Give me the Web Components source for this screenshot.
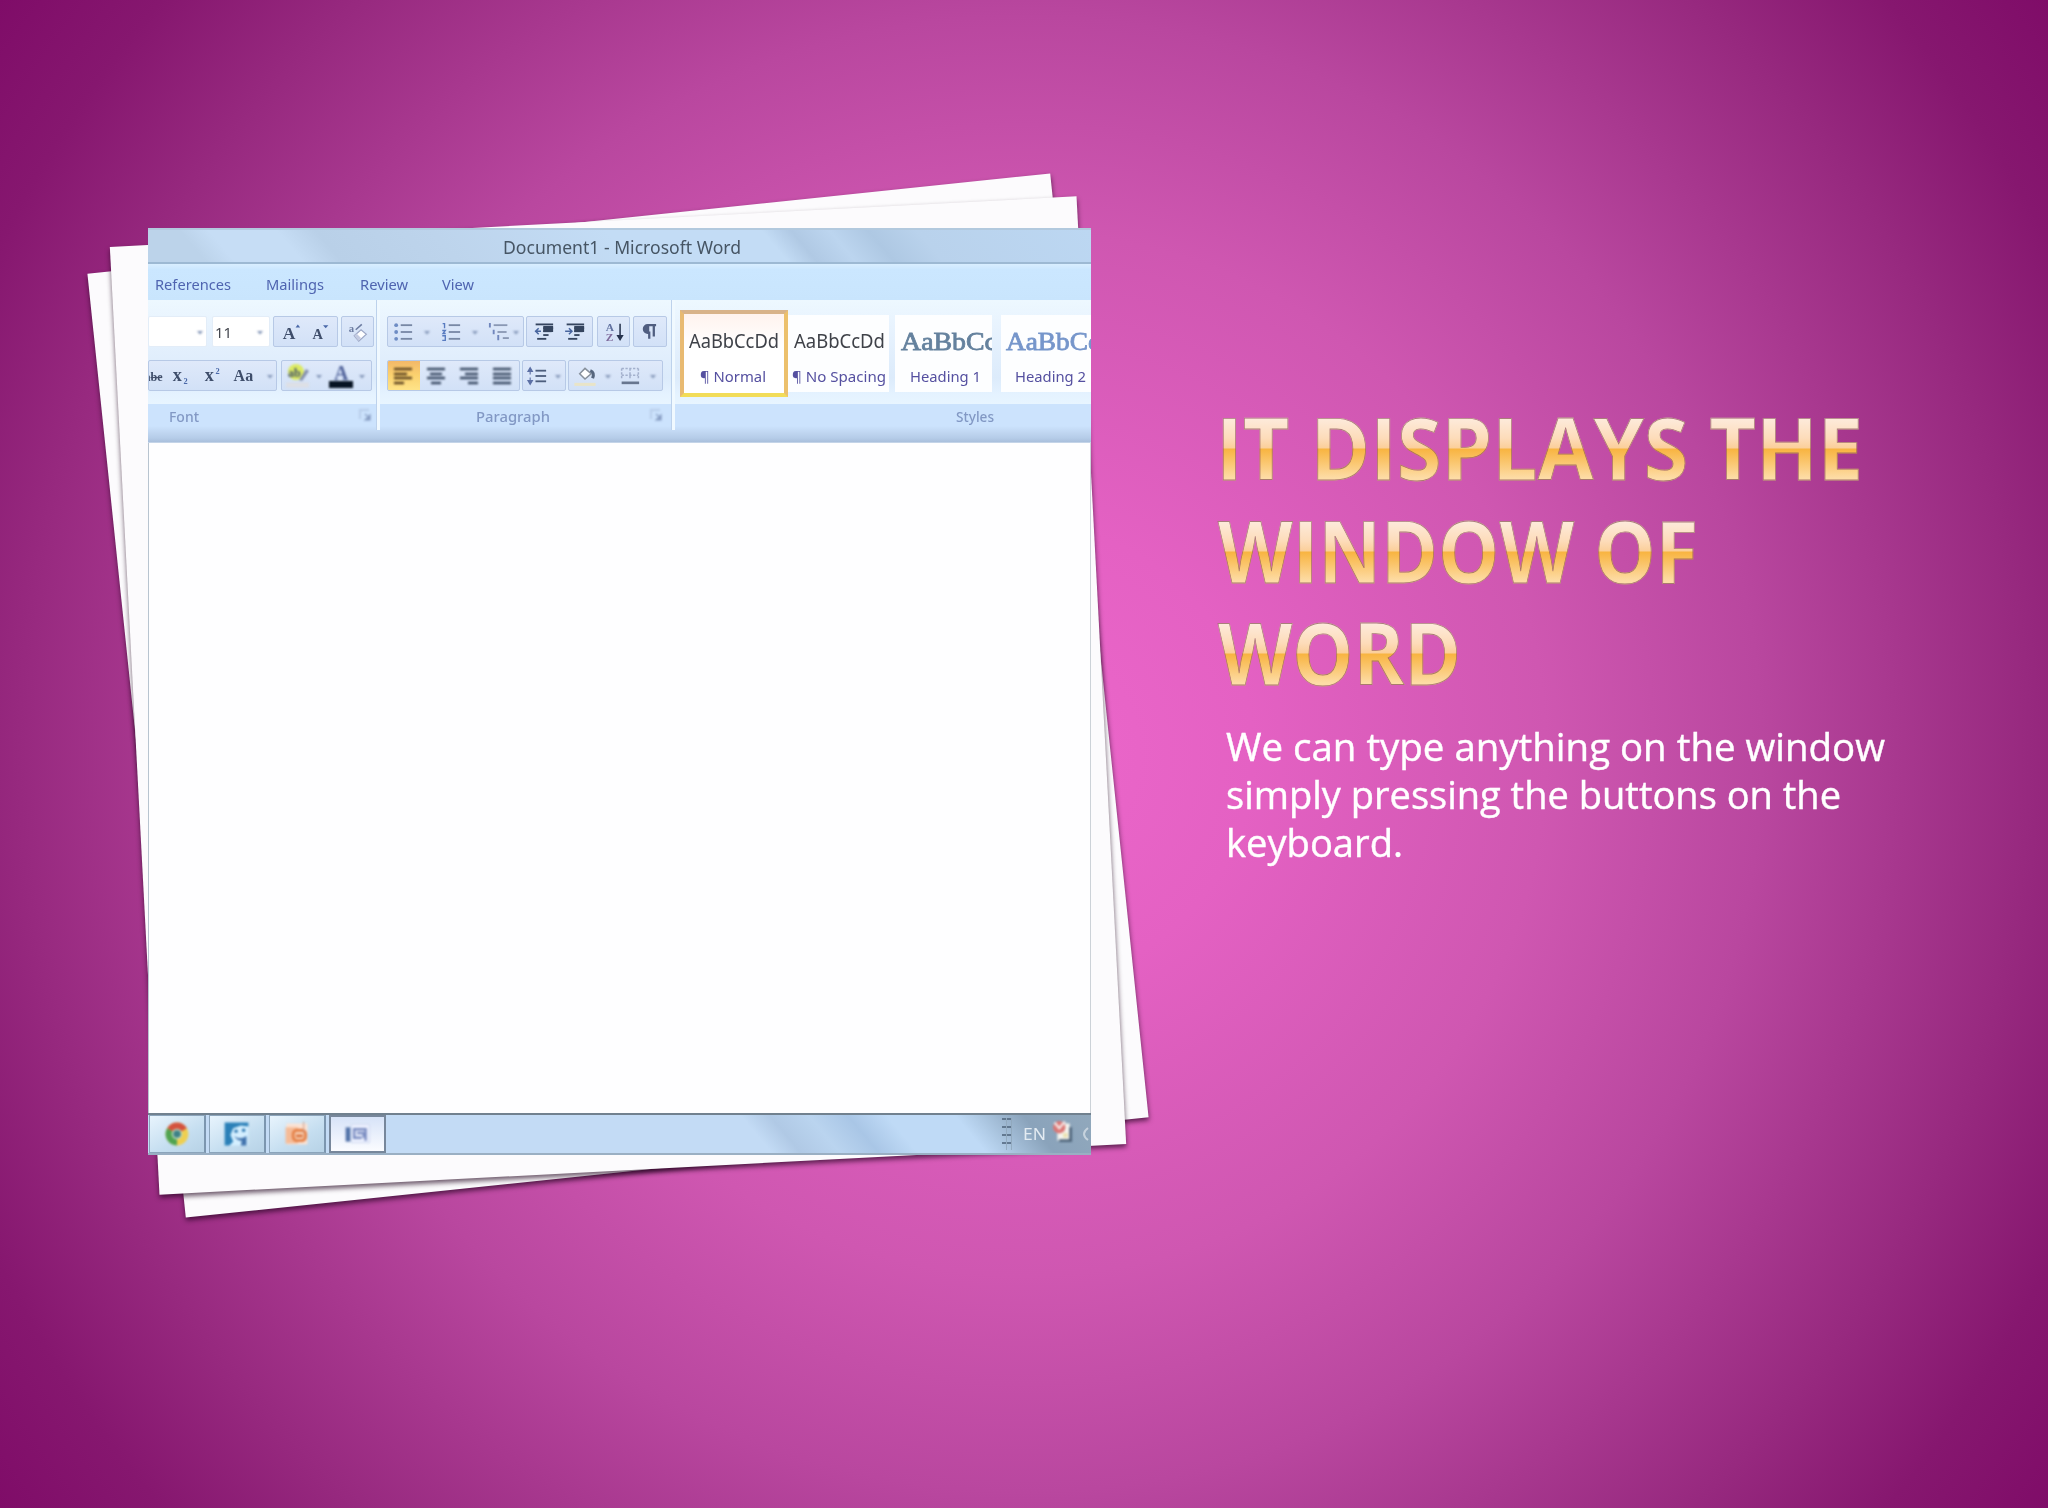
<!DOCTYPE html>
<html lang="en">
<head>
<meta charset="utf-8">
<title>It displays the window of Word</title>
<style>
  html, body {
    margin: 0;
    width: 2048px;
    height: 1508px;
    overflow: hidden;
  }
</style>
</head>
<body>
<word-slide>
  <photo-stack slot="picture"><word-window></word-window></photo-stack>
  <slide-title slot="text">
    <fit-text w="647" style="margin-left:-7px">IT DISPLAYS THE</fit-text>
    <fit-text w="480" style="margin-left:-5px">WINDOW OF</fit-text>
    <fit-text w="243" style="margin-left:-5px">WORD</fit-text>
  </slide-title>
  <slide-body slot="text">
    <fit-text w="659">We can type anything on the window</fit-text>
    <fit-text w="615">simply pressing the buttons on the</fit-text>
    <fit-text w="177">keyboard.</fit-text>
  </slide-body>
</word-slide>

<script>
function attach(el, html) {
  el.attachShadow({ mode: 'open' }).innerHTML = html;
}

class WordSlide extends HTMLElement {
  constructor() {
    super();
    attach(this, `
      <style>
        :host {
          display: grid;
          grid-template-columns: 1223px 1fr;
          width: 2048px;
          height: 1508px;
          box-sizing: border-box;
          background: radial-gradient(circle 1272px at 1024px 754px, #ec67cb 0%, #e461c3 18%, #cf57b1 41%, #b9479f 58%, #97297f 79%, #86176f 90%, #7f0c68 100%);
        }
        .text {
          display: flex;
          flex-direction: column;
          padding-top: 396px;
        }
      </style>
      <div><slot name="picture"></slot></div>
      <div class="text"><slot name="text"></slot></div>
    `);
  }
}

class PhotoStack extends HTMLElement {
  constructor() {
    super();
    attach(this, `
      <style>
        :host {
          display: block;
          position: relative;
          padding: 228px 0 0 148px;
        }
        .sheet {
          position: absolute;
          left: 133.500px;
          top: 220.500px;
          width: 968px;
          height: 949px;
          background: #fcfbfd;
          box-shadow: 0 3px 5px rgba(30, 0, 28, .65);
        }
        .back { transform: rotate(-5.950deg); }
        .front { transform: rotate(-3deg); }
        ::slotted(*) { position: relative; }
      </style>
      <div class="sheet back"></div>
      <div class="sheet front"></div>
      <slot></slot>
    `);
  }
}

class SlideTitle extends HTMLElement {
  constructor() {
    super();
    attach(this, `
      <style>
        :host {
          display: flex;
          flex-direction: column;
          font: 700 86px/102.6px "Open Sans", "Noto Sans", sans-serif;
        }
        ::slotted(fit-text) {
          --fill: linear-gradient(#fdebdc 22px, #fddcba 42px, #fbcf9a 52px, #f8b440 53px, #fddca6 82px);
          --clip: text;
          --ink: transparent;
          --stroke: .8px rgba(140, 90, 90, .75);
        }
      </style>
      <slot></slot>
    `);
  }
}

class SlideBody extends HTMLElement {
  constructor() {
    super();
    attach(this, `
      <style>
        :host {
          display: flex;
          flex-direction: column;
          padding: 18px 0 0 3px;
          color: #fff;
          font: 400 38px/48px "Open Sans", "Noto Sans", sans-serif;
          -webkit-text-stroke: .4px #fff;
        }
      </style>
      <slot></slot>
    `);
  }
}

// one line of text, stretched to the width given in px
class FitText extends HTMLElement {
  connectedCallback() {
    if (this.shadowRoot) return;
    attach(this, `
      <style>
        :host { display: block; white-space: nowrap; }
        span {
          display: inline-block;
          vertical-align: top;
          transform-origin: 0 0;
          background: var(--fill, none);
          -webkit-background-clip: var(--clip, border-box);
          background-clip: var(--clip, border-box);
          color: var(--ink, inherit);
          -webkit-text-stroke: var(--stroke, inherit);
        }
      </style>
      <span><slot></slot></span>
    `);
    const w = Number(this.getAttribute('w'));
    const span = this.shadowRoot.querySelector('span');
    this.style.width = w + 'px';
    span.style.transform = `scaleX(${w / span.getBoundingClientRect().width})`;
  }
}

const lines = (rows, color = '#35455f') => rows.map(([x, y, w]) =>
  `<path d="M${x} ${y}h${w}" stroke="${color}" stroke-width="2.4"/>`).join('');

const ICONS = {
  drop: '<path d="M3 12h6l-3 3.500z" fill="#8496b8"/>',
  grow: '<text x="2" y="22" font-size="23">A</text><path d="M19 7l3-4 3 4z" fill="#4a68a8"/>',
  shrink: '<text x="3" y="22" font-size="19">A</text><path d="M17 4h7l-3.500 4z" fill="#4a68a8"/>',
  clear: '<text x="1" y="13" font-size="14" fill="#6b7ba0">a</text><path d="M10 10l8-7" stroke="#6b7ba0" stroke-width="2"/><path d="M8 18l9-8 7 6-10 9z" fill="#fff" stroke="#9ba6c5" stroke-width="1.500"/><path d="M8 18l3-3 6 6-3 4z" fill="#c3cbe2"/>',
  strike: '<text x="-10" y="19" font-size="16">abe</text><path d="M-2 15h15" stroke="#44506c" stroke-width="1.500"/>',
  sub: '<text x="1" y="20" font-size="24">x</text><text x="15" y="24" font-size="11" fill="#4a68a8">2</text>',
  sup: '<text x="1" y="20" font-size="24">x</text><text x="15" y="11" font-size="11" fill="#4a68a8">2</text>',
  kase: '<text x="-2" y="20" font-size="21">Aa</text>',
  marker: '<circle cx="11" cy="9" r="8" fill="#dcea62"/><text x="3" y="14" font-size="12">ab</text><path d="M14 17l7-11 3 2-7 10z" fill="#8590ad"/><path d="M1 22h23" stroke="#dddfe5" stroke-width="5"/>',
  color: '<text x="6" y="17" font-size="20" fill="#50629a">A</text><path d="M1 21.500h24" stroke="#071322" stroke-width="7"/>',
  bullets: lines([[10, 4, 15], [10, 13, 15], [10, 22, 15]], '#7888a5') + '<g fill="#6e8cc4"><circle cx="4" cy="4" r="2.500"/><circle cx="4" cy="13" r="2.500"/><circle cx="4" cy="22" r="2.500"/></g>',
  numbers: lines([[10, 4, 15], [10, 13, 15], [10, 22, 15]], '#7888a5') + '<path d="M2 2h2.500v6M1.500 11h4l-3 4h3.500M1.500 18h4v6h-4" stroke="#587bc0" stroke-width="1.800" fill="none"/>',
  levels: lines([[6, 4, 18], [11, 13, 12], [18, 21, 8]], '#8a98b4') + '<path d="M1 1v6M6 10v6M12 17v7" stroke="#7187bd" stroke-width="2.500"/>',
  outdent: lines([[2, 3, 23], [12, 8, 13], [12, 12, 11], [12, 17, 7], [4, 22, 12]]) + '<path d="M9 12H1M6 8l-4 4 4 4" stroke="#49669f" stroke-width="2" fill="none"/><path d="M12 5h13v8h-13z" fill="#35455f"/>',
  indent: lines([[2, 3, 23], [12, 8, 13], [12, 12, 11], [12, 17, 7], [4, 22, 12]]) + '<path d="M0 12h8M5 8l4 4-4 4" stroke="#49669f" stroke-width="2" fill="none"/><path d="M12 5h13v8h-13z" fill="#35455f"/>',
  sort: '<text x="2" y="12" font-size="15" fill="#6272a0">A</text><text x="2" y="25" font-size="15" fill="#806c9c">Z</text><path d="M21 2v19M18 18l3 5 3-5z" stroke="#26344e" stroke-width="2" fill="#26344e"/>',
  pilcrow: '<path d="M21 4H10a5 5 0 0 0 0 10h2v8M18 5v14" stroke="#505e80" stroke-width="3" fill="none"/><path d="M12 4h-2a5 5 0 0 0 0 10h2z" fill="#505e80"/>',
  left: lines([[3, 6, 18], [3, 11, 13], [3, 15, 18], [3, 20, 10]], '#5b4220'),
  center: lines([[3, 6, 18], [6, 11, 12], [3, 15, 18], [7, 20, 10]]),
  right: lines([[3, 6, 18], [8, 11, 13], [3, 15, 18], [11, 20, 10]]),
  justify: lines([[3, 6, 18], [3, 11, 18], [3, 15, 18], [3, 20, 18]]),
  spacing: lines([[11, 6, 14], [11, 13, 14], [11, 20, 14]], '#4d5e7d') + '<path d="M4 5v6M4 15v6M1 7l3-5 3 5zM1 19l3 5 3-5z" stroke="#5c70a5" stroke-width="1.500" fill="#5c70a5"/>',
  bucket: '<path d="M6 10l7-7 8 7-8 7z" fill="#fff" stroke="#87909c" stroke-width="2"/><path d="M20 6q6 2 3 10" stroke="#56667e" stroke-width="4" fill="none"/><path d="M-1 24h28" stroke="#e9e4c8" stroke-width="4"/>',
  borders: '<path d="M2 3h22M2 3v15M13 3v15M24 3v15M2 12h22" stroke="#a3b0cc" stroke-width="2" stroke-dasharray="3 2" fill="none"/><path d="M2 22h23" stroke="#68768f" stroke-width="3.500"/>',
  launch: '<path d="M2 12V3h9" stroke="#b3c6e3" stroke-width="1.500" fill="none"/><path d="M7 7l5 5M12 8v5h-5z" stroke="#859bc1" stroke-width="1.200" fill="#859bc1"/>',
  chrome: '<circle cx="13" cy="13" r="12" fill="#eecf50"/><path d="M13 13L2.600 7A12 12 0 0 1 23.400 7z" fill="#d4533f"/><path d="M13 13L2.600 7A12 12 0 0 0 13 25z" fill="#50a350"/><circle cx="13" cy="13" r="5.500" fill="#c5dcc0"/><circle cx="13" cy="13" r="4" fill="#3e8186"/>',
  face: '<path d="M0 1h25v24h-25z" fill="#d4efff"/><path d="M0 1h25v4l-8-1-8 3-3 7 3 7-4 4h-5z" fill="#2b80b8"/><circle cx="12" cy="10" r="1.800" fill="#2773ad"/><circle cx="20" cy="9" r="1.800" fill="#2773ad"/><path d="M10 15q6 5 13 0v10h-6l1-5q-5 0-8-5" fill="#4173ad"/>',
  ppt: '<path d="M2 2h22v22h-22z" fill="#fbe2d3"/><path d="M1 6h13v17h-13z" fill="#f5bb97"/><rect x="9" y="9" width="13" height="11" rx="4" fill="#f6cdb0" stroke="#e58148" stroke-width="3"/><path d="M12 15h7" stroke="#d86932" stroke-width="2.500"/><path d="M20 0v12" stroke="#c99a86"/>',
  word: '<path d="M6 3h19v19h-19z" fill="#eef2ff" stroke="#cfd8ef"/><path d="M0 6h5v15h-5z" fill="#5272a8"/><path d="M8 8h13v12M9 7v10h8M12 12h7v5" stroke="#7c8ec2" stroke-width="2.600" fill="none"/>',
  flag: '<path d="M6 4h13v18h-13z" fill="#f5f4ee"/><path d="M20 8v14h-12" stroke="#51677d" stroke-width="3" fill="none"/><circle cx="8" cy="8" r="6.500" fill="#dc7775"/><path d="M3 3l5 6 6-7" stroke="#f5e6e4" stroke-width="2.500" fill="none"/><path d="M12 14h5v5h-5z" fill="#ece3b4"/>'
};

class WordIcon extends HTMLElement {
  constructor() {
    super();
    attach(this, '');
  }

  connectedCallback() {
    this.shadowRoot.innerHTML = `
      <style>
        :host { display: block; flex: none; width: 26px; height: 26px; }
        :host([name="drop"]) { width: 12px; }
        svg { display: block; overflow: visible; filter: blur(.9px); transform: scale(var(--icon-scale, .76)); }
        :host([name="drop"]) svg, :host([name="launch"]) svg,
        :host([name="left"]) svg, :host([name="center"]) svg, :host([name="right"]) svg,
        :host([name="justify"]) svg, :host([name="marker"]) svg, :host([name="color"]) svg { transform: none; }
        text { font-family: "Liberation Serif", serif; font-weight: 700; }
      </style>
      <svg width="26" height="26" viewBox="0 0 26 26" fill="#3f4e6b">${ICONS[this.getAttribute('name')]}</svg>
    `;
  }
}

class ToolGroup extends HTMLElement {
  constructor() {
    super();
    attach(this, `
      <style>
        :host {
          display: flex;
          align-items: center;
          justify-content: space-evenly;
          flex: none;
          box-sizing: border-box;
          height: 31px;
          border: 1px solid #b7c9e6;
          border-radius: 2px;
          background: linear-gradient(#dfe9fa, #d2e1f7);
          overflow: hidden;
        }
        :host([field]) { background: #fff; border-color: #e3edf8; }
      </style>
      <slot></slot>
    `);
  }
}

class RibbonPanel extends HTMLElement {
  constructor() {
    super();
    attach(this, `
      <style>
        :host {
          display: grid;
          grid-template-rows: 104px 26px;
          flex: none;
          box-sizing: border-box;
          border-right: 3px solid #f0f9ff;
          box-shadow: inset -1px 0 #bdd2ec;
        }
        .name {
          display: flex;
          color: #8298c4;
          font: 500 14px/25px "Noto Sans", sans-serif;
        }
      </style>
      <slot></slot>
      <div class="name"><slot name="name"></slot></div>
    `);
  }
}

class StyleCell extends HTMLElement {
  constructor() {
    super();
    attach(this, `
      <style>
        :host {
          display: flex;
          flex-direction: column;
          flex: none;
          box-sizing: border-box;
          height: 77px;
          padding-top: 12px;
          background: #fdfeff;
          color: #3f4249;
          overflow: hidden;
          font: 19px/28px "Noto Sans", sans-serif;
        }
        :host([picked]) {
          height: 87px;
          padding-top: 13px;
          border: 4px solid;
          border-color: #d8b38a #ecc06c #f2dc58 #e8ba72;
          background: linear-gradient(#fff3ee, #fff 40%);
        }
        :host([serif]) {
          font: 26px/30px "Liberation Serif", serif;
          color: #65829e;
          -webkit-text-stroke: .8px;
        }
        .label {
          padding-top: 9px;
          font: 14.500px/24px "Noto Sans", sans-serif;
          color: #5550a0;
          -webkit-text-stroke: 0;
        }
        :host([serif]) .label { padding-top: 7px; }
      </style>
      <slot name="sample"></slot>
      <div class="label"><slot></slot></div>
    `);
  }
}

class WordWindow extends HTMLElement {
  constructor() {
    super();
    const icons = names => names.split(' ').map(n => `<word-icon name="${n}"></word-icon>`).join('');
    attach(this, `
      <style>
        :host {
          display: grid;
          grid-template-rows: 36px 36px 143px 670px 42px;
          width: 943px;
          height: 927px;
          overflow: hidden;
          background: #fff;
          font: 15px/20px "Noto Sans", sans-serif;
        }
        fit-text { filter: blur(.7px); }
        .caption {
          display: flex;
          box-sizing: border-box;
          padding: 3px 0 0 355px;
          font-size: 18.500px;
          line-height: 27px;
          color: #465564;
          border-top: 2px solid #b2c9de;
          border-bottom: 2px solid #9db9d3;
          background: linear-gradient(50deg, #bcd3ea 0 6%, #c6ddf5 9% 16%, #b9d0e8 20%, #bdd4ec 32%, #c3dcf5 50% 66%, #b0c9e4 69%, #bcd5ef 73%, #aec8e3 77%, #b9d2ec 82%, #bcd7f2);
        }
        .tabs {
          display: flex;
          padding: 10px 0 0 7px;
          color: #4f64b0;
          background: linear-gradient(#d9eeff, #cbe7ff 15%, #c9e5fd);
        }
        .ribbon {
          display: flex;
          padding-bottom: 13px;
          background: linear-gradient(#edf8ff, #e8f3fe 25%, #dcebfb 75%, #e4f2ff 90%, #e8f5ff) top / 100% 104px no-repeat,
                      linear-gradient(#cce3fd 126px, #bfd5f0 133px, #b5cce8 138px, #a9bfdc 142px, #dfe9f4 143px);
        }
        .rows { display: flex; flex-direction: column; gap: 13px; padding-top: 16px; }
        .row { display: flex; }
        .list { justify-content: flex-start; gap: 5px; padding-left: 2px; }
        .list word-icon:last-child { margin-left: -7px; }
        .align { justify-content: flex-start; gap: 7px; }
        .on {
          display: flex;
          align-items: center;
          justify-content: center;
          flex: none;
          width: 32px;
          height: 31px;
          margin-right: -3px;
          background: linear-gradient(#f2b668, #fbd26f 50%, #ffe58a);
        }
        .gallery {
          display: flex;
          align-items: center;
          padding: 10px 0 7px 5px;
        }
        .last { border: 0; box-shadow: none; }
        .page { border-left: 1px solid #b8c4d0; border-right: 1px solid #ccd2d8; background: #fefeff; }
        .taskbar {
          --icon-scale: .95;
          display: flex;
          box-sizing: border-box;
          gap: 3px;
          padding-left: 1px;
          border-top: 2px solid #71818f;
          border-bottom: 2px solid #9aafc3;
          background: linear-gradient(50deg, #c3dbf5 64%, #b0c9e5 67%, #bad4ef 71%, #a9c6e6 75%, #bfdaf6 79% 86%, #b0cbe6 88%, #8aa3bb 93%, #91a8bc);
        }
        .task {
          display: flex;
          align-items: center;
          justify-content: center;
          box-sizing: border-box;
          width: 57px;
          border: 1px solid #8ba4bb;
          border-right: 2px solid #7c96af;
          background: linear-gradient(150deg, #e8f4fd, #c5def0 60%, #b7d2e6);
        }
        .task.active { background: linear-gradient(#d7e3f8, #fbfcff); border: 2px solid #77879b; }
        .tray { display: flex; align-items: center; margin-left: auto; width: 89px; color: #e3ebf2; font-size: 17px; overflow: hidden; }
        .grip {
          width: 12px;
          height: 32px;
          margin-right: 11px;
          background: repeating-linear-gradient(90deg, transparent 0 4px, #90a7bb 4px 5px),
                      repeating-linear-gradient(#53687f 0 2px, transparent 2px 8px);
          opacity: .8;
        }
      </style>

      <div class="caption"><fit-text w="238">Document1 - Microsoft Word</fit-text></div>

      <div class="tabs">
        <fit-text w="76">References</fit-text>
        <fit-text w="58" style="margin-left:35px">Mailings</fit-text>
        <fit-text w="48" style="margin-left:36px">Review</fit-text>
        <fit-text w="32" style="margin-left:34px">View</fit-text>
      </div>

      <div class="ribbon">
        <ribbon-panel style="width:232px">
          <div class="rows">
            <div class="row">
              <tool-group field style="width:59px;justify-content:flex-end">${icons('drop')}</tool-group>
              <tool-group field style="width:58px;margin-left:5px;justify-content:space-between;padding:0 3px 0 2px;color:#44474f">
                <fit-text w="17">11</fit-text>${icons('drop')}
              </tool-group>
              <tool-group style="width:65px;margin-left:3px">${icons('grow shrink')}</tool-group>
              <tool-group style="width:33px;margin-left:3px">${icons('clear')}</tool-group>
            </div>
            <div class="row">
              <tool-group style="width:129px;justify-content:space-between"><word-icon name="strike" style="width:14px"></word-icon>${icons('sub sup kase drop')}</tool-group>
              <tool-group style="width:91px;margin-left:4px">${icons('marker drop color drop')}</tool-group>
            </div>
          </div>
          <fit-text slot="name" w="30" style="margin-left:21px">Font</fit-text>
          <word-icon slot="name" name="launch" style="margin:3px 0 0 159px;width:16px"></word-icon>
        </ribbon-panel>

        <ribbon-panel style="width:295px;padding-left:7px">
          <div class="rows">
            <div class="row">
              <tool-group class="list" style="width:137px">${icons('bullets drop numbers drop levels drop')}</tool-group>
              <tool-group style="width:67px;margin-left:2px">${icons('outdent indent')}</tool-group>
              <tool-group style="width:33px;margin-left:4px">${icons('sort')}</tool-group>
              <tool-group style="width:34px;margin-left:3px">${icons('pilcrow')}</tool-group>
            </div>
            <div class="row">
              <tool-group class="align" style="width:133px"><div class="on">${icons('left')}</div>${icons('center right justify')}</tool-group>
              <tool-group style="width:44px;margin-left:2px">${icons('spacing drop')}</tool-group>
              <tool-group style="width:95px;margin-left:2px">${icons('bucket drop borders drop')}</tool-group>
            </div>
          </div>
          <fit-text slot="name" w="74" style="margin-left:89px">Paragraph</fit-text>
          <word-icon slot="name" name="launch" style="margin:3px 0 0 99px;width:16px"></word-icon>
        </ribbon-panel>

        <ribbon-panel class="last" style="width:416px">
          <div class="gallery">
            <style-cell picked style="width:108px">
              <fit-text slot="sample" w="90" style="margin-left:5px">AaBbCcDd</fit-text>
              <fit-text w="66" style="margin-left:16px">¶ Normal</fit-text>
            </style-cell>
            <style-cell style="width:101px">
              <fit-text slot="sample" w="91" style="margin-left:6px">AaBbCcDd</fit-text>
              <fit-text w="94" style="margin-left:4px">¶ No Spacing</fit-text>
            </style-cell>
            <style-cell serif style="width:97px;margin-left:6px">
              <fit-text slot="sample" w="96" style="margin-left:6px">AaBbCc</fit-text>
              <fit-text w="71" style="margin-left:15px">Heading 1</fit-text>
            </style-cell>
            <style-cell serif style="width:100px;margin-left:9px;color:#7696cb">
              <fit-text slot="sample" w="94" style="margin-left:5px">AaBbCc</fit-text>
              <fit-text w="71" style="margin-left:14px">Heading 2</fit-text>
            </style-cell>
          </div>
          <fit-text slot="name" w="38" style="margin-left:281px">Styles</fit-text>
        </ribbon-panel>
      </div>

      <div class="page"></div>

      <div class="taskbar">
        <div class="task">${icons('chrome')}</div>
        <div class="task">${icons('face')}</div>
        <div class="task">${icons('ppt')}</div>
        <div class="task active">${icons('word')}</div>
        <div class="tray">
          <div class="grip"></div>
          <fit-text w="23">EN</fit-text>
          <word-icon name="flag" style="margin:-4px 0 0 6px"></word-icon>
          <svg width="10" height="16" style="flex:none;margin-left:4px"><path d="M7 2q-8 6 0 12" stroke="#c6d2dd" stroke-width="2" fill="none"/></svg>
        </div>
      </div>
    `);
  }
}

customElements.define('word-slide', WordSlide);
customElements.define('photo-stack', PhotoStack);
customElements.define('slide-title', SlideTitle);
customElements.define('slide-body', SlideBody);
customElements.define('word-icon', WordIcon);
customElements.define('tool-group', ToolGroup);
customElements.define('ribbon-panel', RibbonPanel);
customElements.define('style-cell', StyleCell);
customElements.define('word-window', WordWindow);
customElements.define('fit-text', FitText);
</script>
</body>
</html>
